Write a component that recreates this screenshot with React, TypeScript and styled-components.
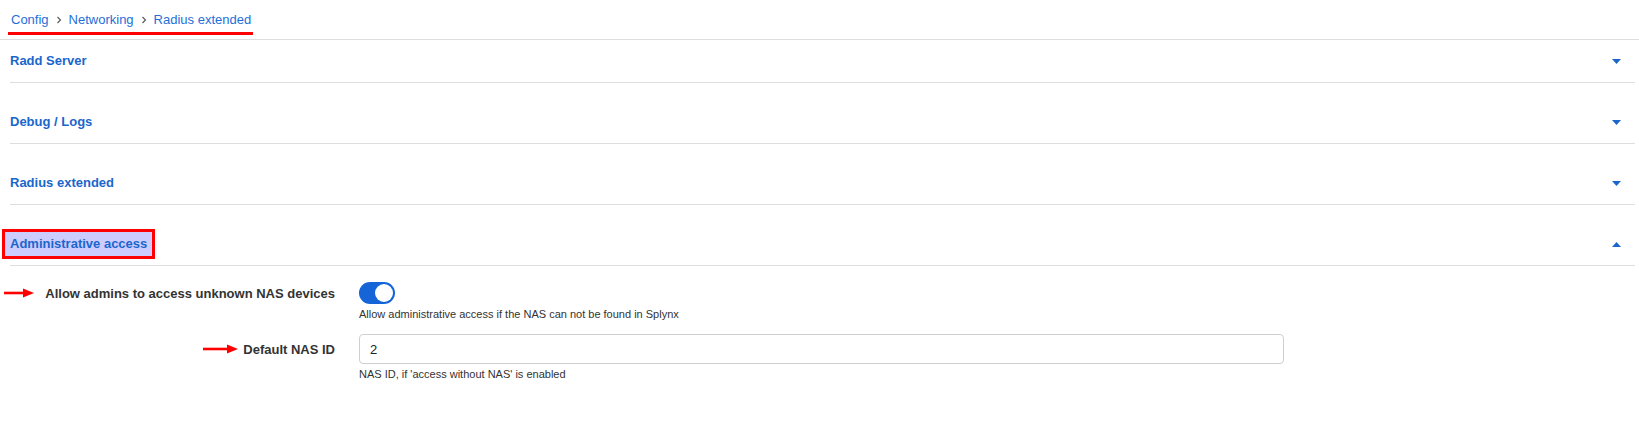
import styled, { createGlobalStyle } from 'styled-components';

const GlobalStyle = createGlobalStyle`
  * {
    box-sizing: border-box;
  }
  body {
    margin: 0;
    background: #fff;
    font-family: 'Liberation Sans', Arial, sans-serif;
    color: #333;
  }
`;

const sections = ['Radd Server', 'Debug / Logs', 'Radius extended'];

const Chevron = () => (
  <svg width={6} height={8} viewBox={'0 0 6 8'}>
    <polyline points={'1.5,1 4.5,4 1.5,7'} fill={'none'} stroke={'#555'} strokeWidth={1.1} />
  </svg>
);

const Caret = ({ up }: { up?: boolean }) => (
  <svg width={9} height={5} viewBox={'0 0 9 5'}>
    <polygon points={up ? '0,5 9,5 4.5,0' : '0,0 9,0 4.5,5'} fill={'#1a66cc'} />
  </svg>
);

const RedArrow = ({ width }: { width: number }) => (
  <svg width={width} height={10} viewBox={`0 0 ${width} 10`}>
    <line x1={0} y1={5} x2={width - 8} y2={5} stroke={'#f00'} strokeWidth={2.6} />
    <polygon points={`${width - 11},0.5 ${width},5 ${width - 11},9.5`} fill={'#f00'} />
  </svg>
);

const App = () => {
  return (
    <>
      <GlobalStyle />
      <Page>
        <Breadcrumbs>
          <nav>
            <a>Config</a>
            <Chevron />
            <a>Networking</a>
            <Chevron />
            <a>Radius extended</a>
          </nav>
        </Breadcrumbs>
        <Content>
          {sections.map((title) => (
            <Section key={title}>
              <SectionHeader>
                <SectionTitle>{title}</SectionTitle>
                <Caret />
              </SectionHeader>
            </Section>
          ))}
          <Section>
            <SectionHeader>
              <SectionTitle $marked>Administrative access</SectionTitle>
              <Caret up />
            </SectionHeader>
            <Form>
              <Row>
                <Label>
                  <span>
                    <ArrowMark $gap={11}>
                      <RedArrow width={30} />
                    </ArrowMark>
                    Allow admins to access unknown NAS devices
                  </span>
                </Label>
                <Control>
                  <Toggle>
                    <span />
                  </Toggle>
                  <Help>Allow administrative access if the NAS can not be found in Splynx</Help>
                </Control>
              </Row>
              <Row $input>
                <Label>
                  <span>
                    <ArrowMark $gap={5}>
                      <RedArrow width={35} />
                    </ArrowMark>
                    Default NAS ID
                  </span>
                </Label>
                <Control>
                  <Input type={'text'} defaultValue={'2'} />
                  <Help>NAS ID, if 'access without NAS' is enabled</Help>
                </Control>
              </Row>
            </Form>
          </Section>
        </Content>
      </Page>
    </>
  );
};

const Page = styled.div`
  width: 100%;
  min-height: 431px;
`;

const Breadcrumbs = styled.div`
  height: 40px;
  border-bottom: 1px solid #dedede;
  padding: 10px 0 0 8px;
  & > nav {
    display: inline-flex;
    align-items: center;
    gap: 7px;
    padding: 0 2px 5px 3px;
    border-bottom: 3px solid #f00;
    & > a {
      font-size: 13px;
      line-height: 15px;
      color: #1e6fd9;
      cursor: pointer;
    }
  }
`;

const Content = styled.div`
  padding: 0 4px 0 10px;
`;

const Section = styled.div`
  & + & {
    margin-top: 18px;
  }
`;

const SectionHeader = styled.div`
  display: flex;
  justify-content: space-between;
  align-items: center;
  height: 43px;
  padding: 13px 14px 13px 0;
  border-bottom: 1px solid #dedede;
`;

const SectionTitle = styled.span<{ $marked?: boolean }>`
  font-size: 13px;
  font-weight: 700;
  line-height: 16px;
  color: #1a66cc;
  ${({ $marked }) =>
    $marked &&
    `
    background: #ccccff;
    padding: 4px 5px;
    margin: -4px -5px;
    outline: 3px solid #f00;
  `}
`;

const Form = styled.div`
  display: flex;
  flex-direction: column;
  padding-top: 16px;
  gap: 13px;
`;

const Row = styled.div<{ $input?: boolean }>`
  display: grid;
  grid-template-columns: 325px 925px;
  column-gap: 24px;
  align-items: start;
  & > div:first-child {
    height: ${({ $input }) => ($input ? '30px' : '22px')};
  }
`;

const Label = styled.div`
  display: flex;
  align-items: center;
  justify-content: flex-end;
  font-size: 13px;
  font-weight: 700;
  color: #333;
  & > span {
    position: relative;
  }
`;

const ArrowMark = styled.i<{ $gap: number }>`
  position: absolute;
  top: 50%;
  right: calc(100% + ${({ $gap }) => $gap}px);
  display: flex;
  transform: translateY(-50%);
`;

const Control = styled.div`
  display: flex;
  flex-direction: column;
  align-items: flex-start;
`;

const Toggle = styled.div`
  position: relative;
  width: 36px;
  height: 22px;
  border-radius: 11px;
  background: #1565d8;
  & > span {
    position: absolute;
    top: 2px;
    right: 2px;
    width: 18px;
    height: 18px;
    border-radius: 50%;
    background: #fff;
    box-shadow: 0 0 0 1px #1565d8;
  }
`;

const Input = styled.input`
  width: 100%;
  height: 30px;
  padding: 0 10px;
  border: 1px solid #cfcfcf;
  border-radius: 4px;
  font-family: 'Liberation Sans', Arial, sans-serif;
  font-size: 13px;
  color: #222;
  outline: none;
`;

const Help = styled.p`
  margin: 4px 0 0;
  font-size: 11px;
  line-height: 13px;
  color: #333;
`;

export default App;
